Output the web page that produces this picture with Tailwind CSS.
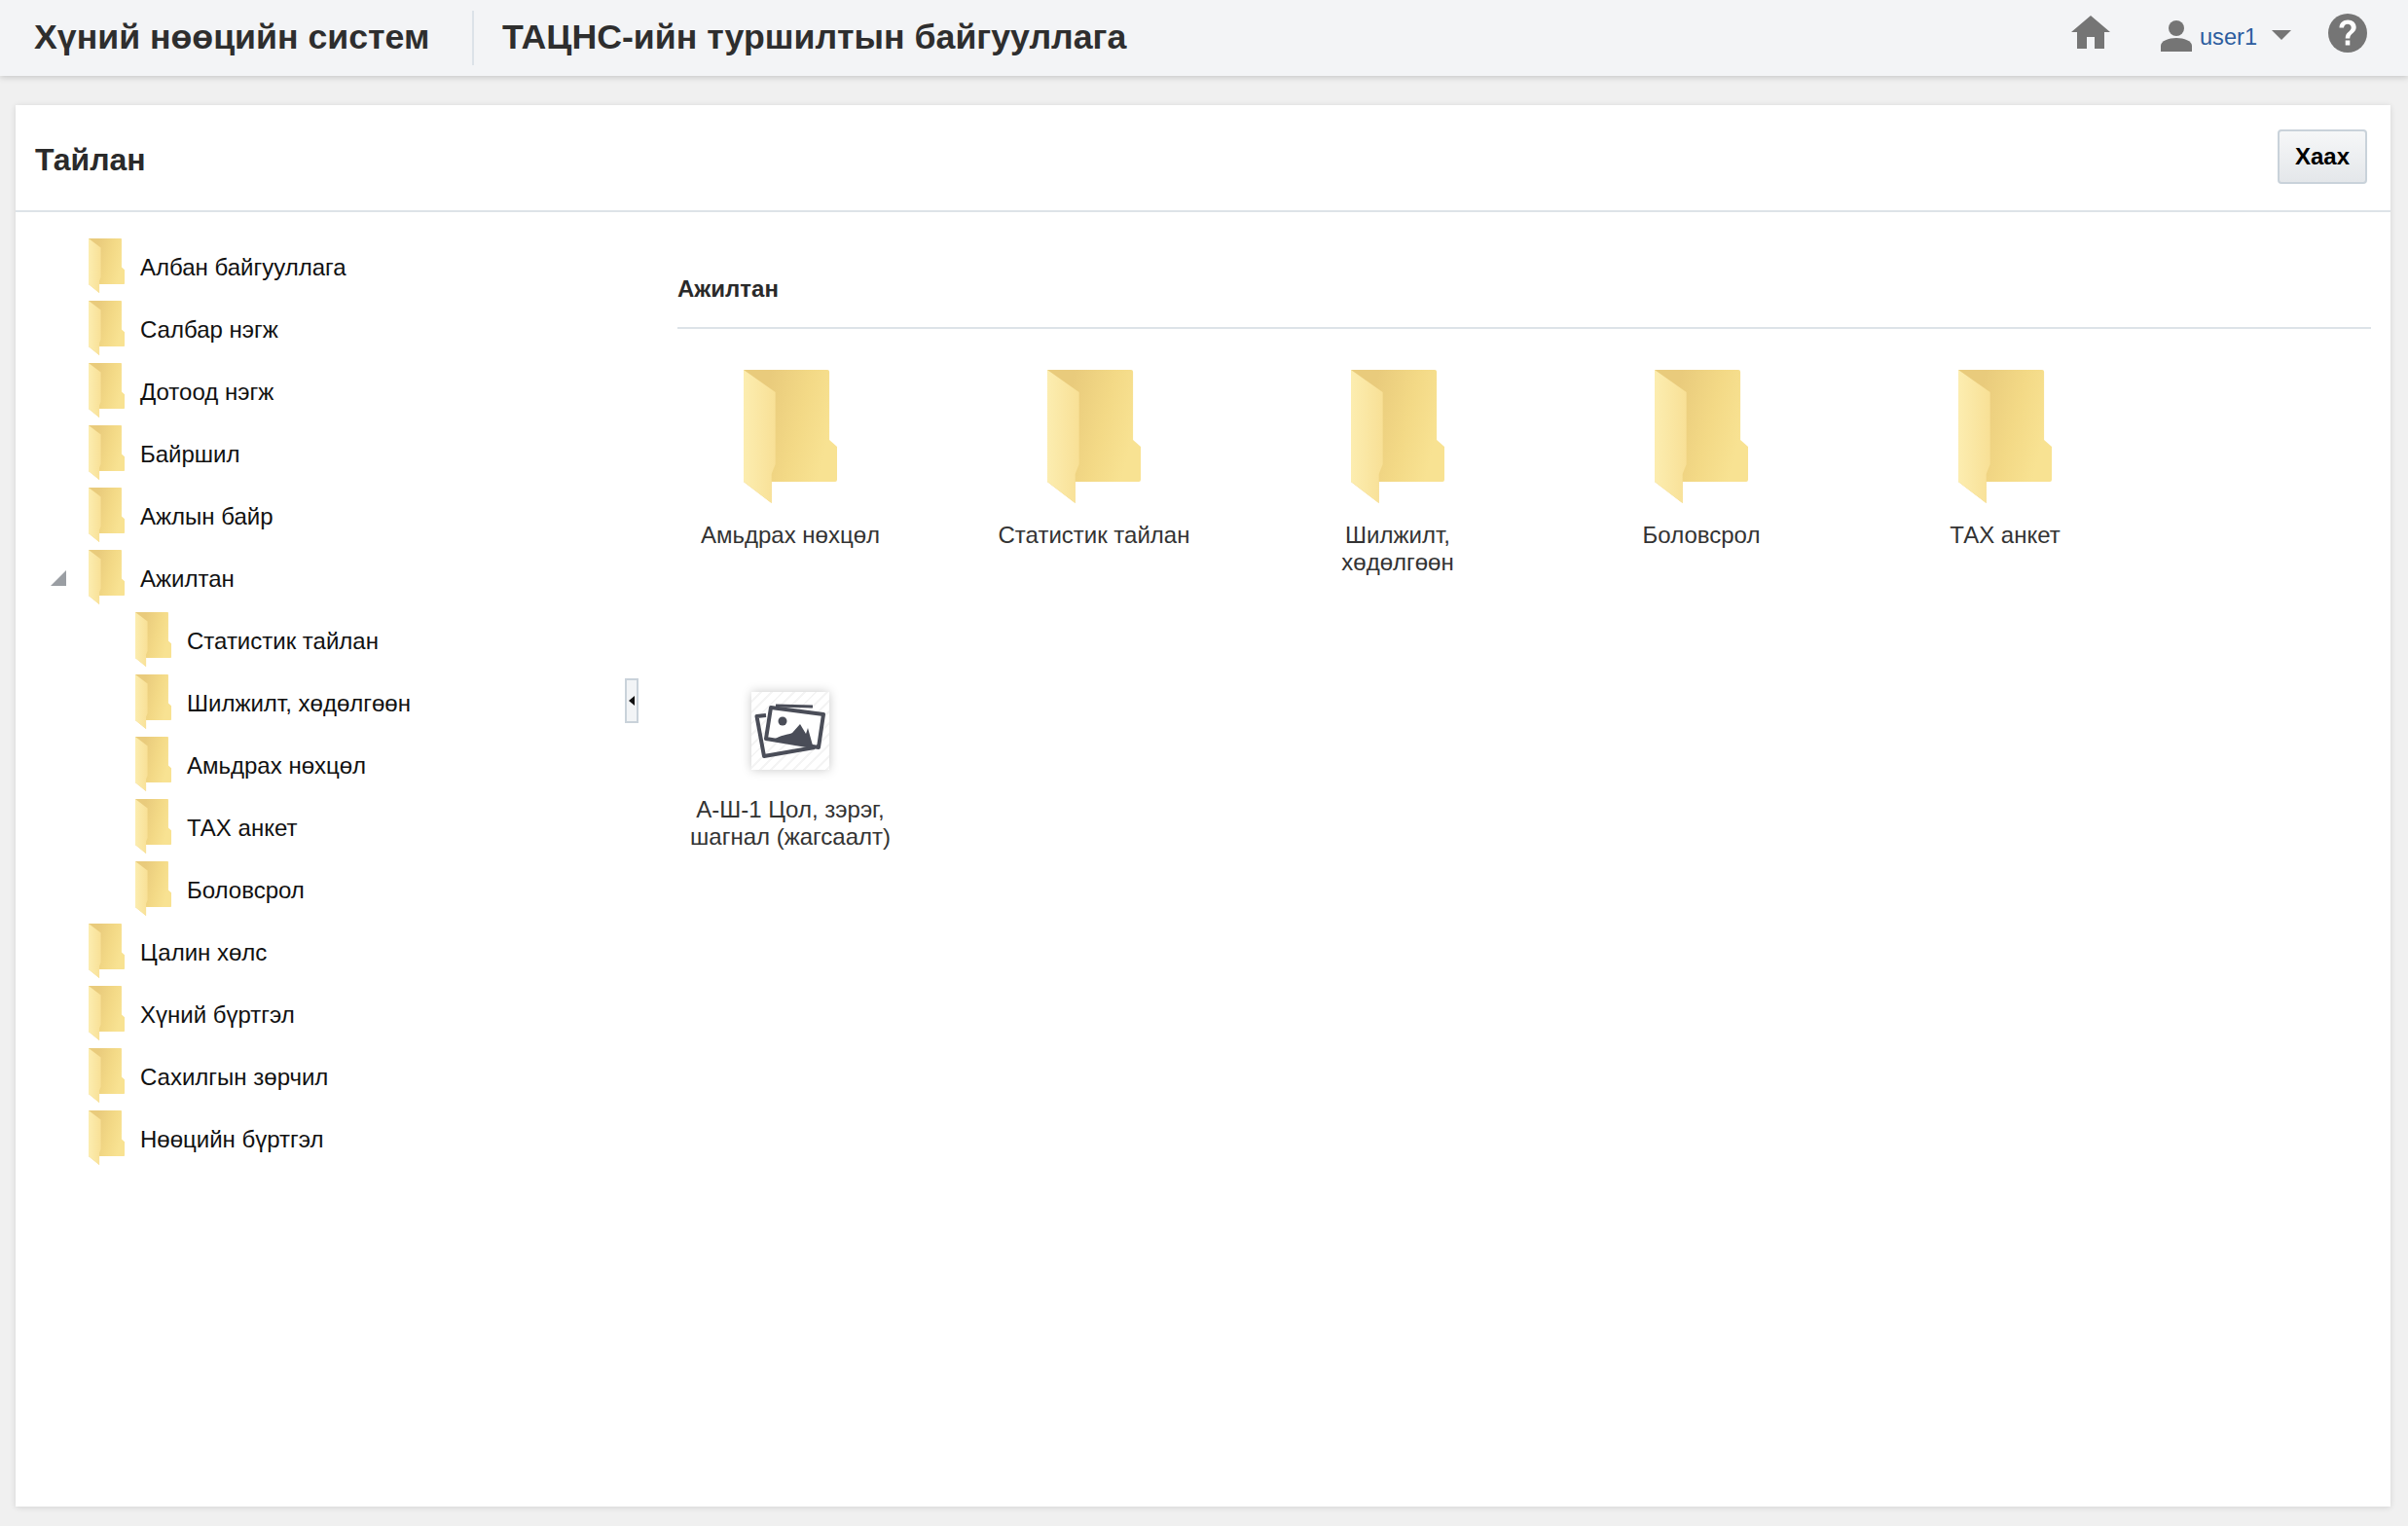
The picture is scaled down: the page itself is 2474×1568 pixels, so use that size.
<!DOCTYPE html>
<html>
<head>
<meta charset="utf-8">
<script src="https://cdn.jsdelivr.net/npm/@tailwindcss/browser@4"></script>
</head>
<body class="m-0 bg-[#f0f0f0] font-['Liberation_Sans',Arial,sans-serif] w-[2474px] h-[1568px] overflow-hidden">
<svg width="0" height="0" class="absolute">
  <defs>
    <linearGradient id="back" x1="0.3" y1="0" x2="1" y2="0.25"><stop offset="0" stop-color="#e9cb7c"/><stop offset="0.55" stop-color="#f3d986"/><stop offset="1" stop-color="#f8e292"/></linearGradient>
    <linearGradient id="front" x1="0" y1="0" x2="1" y2="0"><stop offset="0" stop-color="#fcedb0"/><stop offset="1" stop-color="#f8e096"/></linearGradient>
    <symbol id="folder" viewBox="0 0 97 137" preserveAspectRatio="none">
      <path d="M0 0H87a2 2 0 0 1 2 2V72L97 79V113a2 2 0 0 1-2 2H29V137L0 115Z" fill="url(#back)"/>
      <path d="M0 0L33 23V97L29 107V137L0 115Z" fill="url(#front)"/>
    </symbol>
  </defs>
</svg>

<header class="h-[78px] bg-[#f3f4f6] shadow-[0_2px_6px_rgba(0,0,0,0.16)] flex items-center pl-[35px] pr-[42px] relative">
  <span class="text-[35.700px] font-bold text-[#2e2e2e] leading-none w-[450px]">Хүний нөөцийн систем</span>
  <span class="w-[2px] h-[56px] bg-[#dce2e8]"></span>
  <span class="text-[35.700px] font-bold text-[#2e2e2e] leading-none ml-[29px]">ТАЦНС-ийн туршилтын байгууллага</span>
  <div class="ml-auto flex items-center">
    <svg width="40" height="34" viewBox="0 0 40 34" class="mr-[52px] mb-[12px]"><path d="M20 0L40 17H34V34H24V22H16V34H6V17H0Z" fill="#757575"/></svg>
    <svg width="32" height="32" viewBox="0 0 32 32" class="mb-[4px]"><circle cx="16" cy="8" r="8" fill="#757575"/><path d="M0 32V26C0 21 8 18 16 18S32 21 32 26V32Z" fill="#757575"/></svg>
    <span class="text-[23.600px] text-[#2c5c9e] ml-[8px] w-[58px] leading-none">user1</span>
    <svg width="20" height="10" viewBox="0 0 20 10" class="ml-[16px] mb-[6px]"><path d="M0 0H20L10 10Z" fill="#757575"/></svg>
    <svg width="40" height="40" viewBox="0 0 40 40" class="ml-[38px] mb-[10px]"><circle cx="20" cy="20" r="20" fill="#757575"/><path d="M11.500 14.500c0-5 3.800-8 8.700-8s8.500 3 8.500 7.500c0 6-6.500 6-6.500 11.500h-4.500c0-7 6-6.800 6-11.200 0-2-1.600-3.500-3.700-3.500-2.300 0-3.800 1.500-4 3.700Z" fill="#fff"/><rect x="17.700" y="27.500" width="4.600" height="5" fill="#fff"/></svg>
  </div>
</header>

<main class="ml-[16px] mr-[18px] mt-[30px] h-[1440px] bg-white shadow-[0_1px_6px_rgba(0,0,0,0.12)] flex flex-col">
  <div class="h-[110px] shrink-0 border-b-2 border-[#dde3e8] flex items-center justify-between pl-[20px] pr-[24px]">
    <h1 class="text-[32px] font-bold text-[#2a2a2a] leading-none mt-[3px]">Тайлан</h1>
    <button class="w-[92px] h-[56px] rounded-[4px] border-2 border-[#c9d2da] bg-gradient-to-b from-[#f6f7f8] to-[#e4e7ea] text-[24px] font-bold text-black mt-[-2px]">Хаах</button>
  </div>
  <div class="flex flex-1">
    <nav class="w-[626px] shrink-0 pt-[23px] text-[24px] text-[#111] leading-none">
      <div class="h-[64px] flex items-center pl-[75px]"><svg class="w-[37px] h-[56px]"><use href="#folder"/></svg><span class="ml-[16px] mt-[3px]">Албан байгууллага</span></div>
      <div class="h-[64px] flex items-center pl-[75px]"><svg class="w-[37px] h-[56px]"><use href="#folder"/></svg><span class="ml-[16px] mt-[3px]">Салбар нэгж</span></div>
      <div class="h-[64px] flex items-center pl-[75px]"><svg class="w-[37px] h-[56px]"><use href="#folder"/></svg><span class="ml-[16px] mt-[3px]">Дотоод нэгж</span></div>
      <div class="h-[64px] flex items-center pl-[75px]"><svg class="w-[37px] h-[56px]"><use href="#folder"/></svg><span class="ml-[16px] mt-[3px]">Байршил</span></div>
      <div class="h-[64px] flex items-center pl-[75px]"><svg class="w-[37px] h-[56px]"><use href="#folder"/></svg><span class="ml-[16px] mt-[3px]">Ажлын байр</span></div>
      <div class="h-[64px] flex items-center pl-[36px]"><svg width="16" height="16" viewBox="0 0 16 16" class="mr-[23px] mt-[2px]"><path d="M16 0V16H0Z" fill="#9a9ea3"/></svg><svg class="w-[37px] h-[56px]"><use href="#folder"/></svg><span class="ml-[16px] mt-[3px]">Ажилтан</span></div>
      <div class="h-[64px] flex items-center pl-[123px]"><svg class="w-[37px] h-[56px]"><use href="#folder"/></svg><span class="ml-[16px] mt-[3px]">Статистик тайлан</span></div>
      <div class="h-[64px] flex items-center pl-[123px]"><svg class="w-[37px] h-[56px]"><use href="#folder"/></svg><span class="ml-[16px] mt-[3px]">Шилжилт, хөдөлгөөн</span></div>
      <div class="h-[64px] flex items-center pl-[123px]"><svg class="w-[37px] h-[56px]"><use href="#folder"/></svg><span class="ml-[16px] mt-[3px]">Амьдрах нөхцөл</span></div>
      <div class="h-[64px] flex items-center pl-[123px]"><svg class="w-[37px] h-[56px]"><use href="#folder"/></svg><span class="ml-[16px] mt-[3px]">ТАХ анкет</span></div>
      <div class="h-[64px] flex items-center pl-[123px]"><svg class="w-[37px] h-[56px]"><use href="#folder"/></svg><span class="ml-[16px] mt-[3px]">Боловсрол</span></div>
      <div class="h-[64px] flex items-center pl-[75px]"><svg class="w-[37px] h-[56px]"><use href="#folder"/></svg><span class="ml-[16px] mt-[3px]">Цалин хөлс</span></div>
      <div class="h-[64px] flex items-center pl-[75px]"><svg class="w-[37px] h-[56px]"><use href="#folder"/></svg><span class="ml-[16px] mt-[3px]">Хүний бүртгэл</span></div>
      <div class="h-[64px] flex items-center pl-[75px]"><svg class="w-[37px] h-[56px]"><use href="#folder"/></svg><span class="ml-[16px] mt-[3px]">Сахилгын зөрчил</span></div>
      <div class="h-[64px] flex items-center pl-[75px]"><svg class="w-[37px] h-[56px]"><use href="#folder"/></svg><span class="ml-[16px] mt-[3px]">Нөөцийн бүртгэл</span></div>
    </nav>
    <div class="w-[14px] h-[46px] shrink-0 mt-[479px] border-2 border-[#c9d2da] bg-[#f2f4f6] flex items-center justify-center">
      <svg width="6" height="10" viewBox="0 0 6 10"><path d="M6 0V10L0 5Z" fill="#111"/></svg>
    </div>
    <section class="flex-1 pl-[40px] pr-[20px]">
      <h2 class="h-[120px] border-b-2 border-[#dde3e8] text-[24px] font-bold text-[#2a2a2a] leading-none pt-[67px]">Ажилтан</h2>
      <div class="grid grid-cols-[repeat(5,312px)] ml-[-40px] text-[24px] leading-[28px] text-[#333] text-center">
        <div class="h-[327px] flex flex-col items-center pt-[42px]"><svg class="w-[96px] h-[137px]"><use href="#folder"/></svg><p class="mt-[19px]">Амьдрах нөхцөл</p></div>
        <div class="h-[327px] flex flex-col items-center pt-[42px]"><svg class="w-[96px] h-[137px]"><use href="#folder"/></svg><p class="mt-[19px]">Статистик тайлан</p></div>
        <div class="h-[327px] flex flex-col items-center pt-[42px]"><svg class="w-[96px] h-[137px]"><use href="#folder"/></svg><p class="mt-[19px]">Шилжилт,<br>хөдөлгөөн</p></div>
        <div class="h-[327px] flex flex-col items-center pt-[42px]"><svg class="w-[96px] h-[137px]"><use href="#folder"/></svg><p class="mt-[19px]">Боловсрол</p></div>
        <div class="h-[327px] flex flex-col items-center pt-[42px]"><svg class="w-[96px] h-[137px]"><use href="#folder"/></svg><p class="mt-[19px]">ТАХ анкет</p></div>
        <div class="flex flex-col items-center pt-[46px]">
          <div class="w-[80px] h-[80px] shadow-[0_0_10px_rgba(0,0,0,0.22)] bg-[repeating-linear-gradient(135deg,#ffffff_0,#ffffff_6px,#f4f4f4_6px,#f4f4f4_8px)]">
            <svg viewBox="0 0 80 80" width="80" height="80" fill="none" stroke="#4a4d58" stroke-width="4" stroke-linejoin="round">
              <path d="M15 24L5.500 25L13 66L65 57" />
              <path d="M25 14L63 15" stroke-width="3"/>
              <path d="M20 16L74 23L69 57L15 48Z" fill="#fff"/>
              <circle cx="32" cy="30" r="4.500" fill="#4a4d58" stroke="none"/>
              <path d="M21 50C30 44 38 44 42 42L50 33L56 43L58 37L63 55Z" fill="#4a4d58" stroke="none"/>
            </svg>
          </div>
          <p class="mt-[27px]">А-Ш-1 Цол, зэрэг,<br>шагнал (жагсаалт)</p>
        </div>
      </div>
    </section>
  </div>
</main>
</body>
</html>
